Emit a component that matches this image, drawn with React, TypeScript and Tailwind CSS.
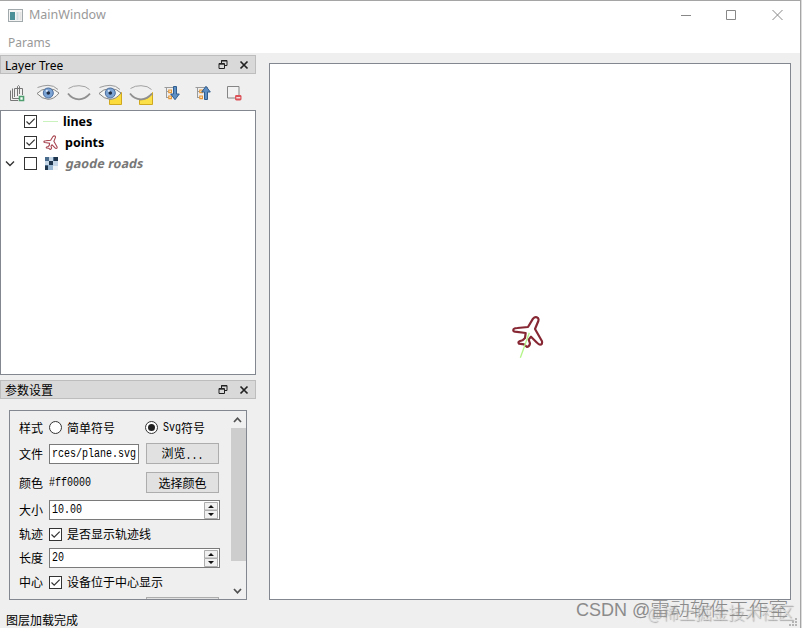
import React, { useState } from "react";

const PLANE =
  "M99 41 Q106 33 114 39 Q117 43 115 48 L105 72 L126 109 Q128 119 120 119 Q116 119 111 113 L93 95 L86 104 L90 115 Q89 124 81 126 L72 118 L57 116 Q53 112 58 109 L68 106 L75 99 L77 84 L45 80 Q37 78 41 72 Q45 69 52 69 L84 66 Z";

const ui = "font-['Noto_Sans','Noto_Sans_CJK_SC',sans-serif]";

// half-width latin, stretched to the height of the CJK glyphs
const Mono = ({ children }: { children: React.ReactNode }) => (
  <span className="inline-block translate-y-px scale-y-[1.2] font-['Liberation_Mono',monospace] text-[10px] leading-none">{children}</span>
);

const EyeShape = () => (
  <>
    <path d="M1.5 6.5 Q7 4.5 12 4.3 Q18 4.3 22 8.5" fill="none" stroke="#9a9a9a" strokeWidth="1" />
    <path d="M1 12.5 Q5 8 12 7.5 Q19 7.8 23 12 Q18 18.5 12 18.3 Q6 18 1 12.5Z" fill="#f6f6f4" stroke="#858585" strokeWidth="1" />
    <circle cx="12.3" cy="12" r="5" fill="#7ba3d4" stroke="#4c6e9e" strokeWidth="1" />
    <circle cx="12.3" cy="12" r="1.8" fill="#202c42" />
    <circle cx="10.8" cy="9.8" r="1.1" fill="#dce8f6" />
  </>
);

const ClosedShape = () => (
  <>
    <path d="M1.5 7.5 Q6 4.5 12 4.7 Q19 4.8 22.5 8.5" fill="none" stroke="#a2a2a2" strokeWidth="1" />
    <path d="M1 12.5 Q5 18 12 18.4 Q18 18.3 23 12.7" fill="none" stroke="#909090" strokeWidth="1.8" />
  </>
);

const TreeLines = () => (
  <>
    <path d="M4.5 6.5 H17 M6.5 6.5 V17 M6.5 10.5 H9 M6.5 16.5 H9" fill="none" stroke="#9b9b9b" />
    <path d="M8.8 9 h2.6 v2.6 h-2.6z M8.8 15 h2.6 v2.6 h-2.6z" fill="#fff1d8" stroke="#e5983a" strokeWidth="1.2" />
  </>
);

const toolIcons: React.ReactNode[] = [
  <>
    <path d="M5.5 9.5 V19.5 H13 M7.5 7.5 V17.5 H14 M9.5 16 V7.5 H17.5 V14 M12.5 15 V5.5 Q13.5 3.5 14.5 5.5 V13" fill="none" stroke="#777" />
    <path d="M14.5 15.5h4v4h-4z" fill="#f4fff7" stroke="#4f9e70" strokeWidth="1.6" />
  </>,
  <EyeShape />,
  <ClosedShape />,
  <>
    <path d="M11.5 11.5 h12 v12 h-12z" fill="#fbdc3c" stroke="#d0a820" />
    <EyeShape />
  </>,
  <>
    <path d="M23.5 11.5 V23.5 H10.5 V19 Q20 19 23.5 11.5Z" fill="#fbe04a" stroke="#d0a820" />
    <ClosedShape />
  </>,
  <>
    <TreeLines />
    <path d="M13.5 5.5 h3 v7.5 h2.8 l-4.3 5.7 -4.3 -5.7 h2.8z" fill="#5d8fc5" stroke="#315d8e" />
  </>,
  <>
    <TreeLines />
    <path d="M13.5 18.5 h3 v-7.5 h2.8 l-4.3 -5.7 -4.3 5.7 h2.8z" fill="#5d8fc5" stroke="#315d8e" />
  </>,
  <>
    <path d="M5.5 5.5 h11.5 v11.5 h-11.5z" fill="#f2f2f2" stroke="#858585" />
    <rect x="13" y="14" width="6.5" height="5.5" rx="1.4" fill="#dc5259" />
    <path d="M14.3 16.8 h4" stroke="#fff" strokeWidth="1.2" />
  </>,
];

function DockTitle({ title }: { title: string }) {
  return (
    <div className={`flex h-[19px] w-64 shrink-0 items-center border border-[#bdbdbd] bg-[#d9d9d9] pl-1 text-[12px] text-black ${ui}`}>
      <span className="flex-1 pt-[2px] leading-none">{title}</span>
      <svg width="10" height="10" className="mr-[11px]" fill="none" stroke="#222" strokeWidth="1">
        <path d="M3.5 3 V.5 h5.5 v5 H7 M3 1 h6 M1 3.5 h5.5 v5 H1z M1 4.2 h5.5" />
      </svg>
      <svg width="10" height="10" className="mr-[6px]" stroke="#222" strokeWidth="1.7">
        <path d="M1.5 1.5 L8.5 8.5 M8.5 1.5 L1.5 8.5" />
      </svg>
    </div>
  );
}

function Check({ checked, onClick }: { checked: boolean; onClick?: () => void }) {
  return (
    <span onClick={onClick} className="flex size-[13px] shrink-0 items-center justify-center border border-[#333] bg-white">
      {checked && (
        <svg width="11" height="11" fill="none" stroke="#333" strokeWidth="1.2">
          <path d="M1.5 5.5 L4.2 8.2 L9.7 2.7" />
        </svg>
      )}
    </span>
  );
}

function Radio({ checked, onClick }: { checked: boolean; onClick: () => void }) {
  return (
    <span onClick={onClick} className="mb-px flex size-[13px] shrink-0 items-center justify-center rounded-full border border-[#333] bg-white">
      {checked && <span className="size-[7px] rounded-full bg-[#222]" />}
    </span>
  );
}

function Row({ label, height, children }: { label: string; height: string; children: React.ReactNode }) {
  return (
    <div className={`flex shrink-0 items-center ${height}`}>
      <span className="w-[30px] shrink-0">{label}</span>
      {children}
    </div>
  );
}

function PushButton({ children }: { children: React.ReactNode }) {
  return <button className="mb-px h-[21px] w-[73px] shrink-0 border border-[#adadad] bg-[#e1e1e1] text-center leading-none">{children}</button>;
}

function Spin({ value }: { value: string }) {
  return (
    <div className="flex h-5 w-[171px] items-center border border-[#7a7a7a] bg-white pr-px pl-[2px]">
      <span className="flex flex-1 items-center leading-none"><Mono>{value}</Mono></span>
      <svg width="14" height="17">
        <path d="M.5 .5 h13 v7.5 h-13z M.5 8.5 h13 v8 h-13z" fill="#f0f0f0" stroke="#adadad" />
        <path d="M4 6 L7 3 L10 6z M4 11 L7 14 L10 11z" fill="#111" />
      </svg>
    </div>
  );
}

export default function App() {
  const [lines, setLines] = useState(true);
  const [points, setPoints] = useState(true);
  const [roads, setRoads] = useState(false);
  const [style, setStyle] = useState("svg");
  const [track, setTrack] = useState(true);
  const [center, setCenter] = useState(true);

  return (
    <div className="relative flex h-[628px] w-[802px] overflow-hidden bg-[#dcdcdc]">
      <div className="flex w-[801px] flex-col border-t border-r border-[#a5a5a5] bg-[#efefef]">
        {/* title bar */}
        <header className={`flex h-[30px] shrink-0 items-center bg-white pb-[2px] pl-2 text-[12px] text-[#999] ${ui}`}>
          <svg width="15" height="13" className="mr-[6px]">
            <rect x=".5" y=".5" width="14" height="12" fill="#f4f4f4" stroke="#a2a9ad" />
            <path d="M2 3h5v8H2z" fill="#4b8f99" />
            <path d="M8.5 3h2v8h-2z" fill="#d1dce0" />
            <path d="M11.5 3h2v8h-2z" fill="#e2e2e2" />
          </svg>
          <span className="flex-1 pt-px text-[12.5px]">MainWindow</span>
          <svg width="104" height="12" className="mr-[16px]" fill="none" stroke="#888">
            <path d="M1 6.5 h10 M46.5 1.5 h9 v9 h-9z M92.5 1 L102.5 11 M102.5 1 L92.5 11" />
          </svg>
        </header>
        <nav className={`h-[22px] shrink-0 bg-white pl-2 text-[12px] leading-[24px] text-[#999] ${ui}`}>Params</nav>

        <div className="flex flex-1 overflow-hidden">
          <aside className="flex w-64 shrink-0 flex-col pt-[2px]">
            <DockTitle title="Layer Tree" />
            <div className="flex h-9 shrink-0 items-center gap-[7px] pt-[2px] pl-[5px]">
              {toolIcons.map((icon, i) => (
                <svg key={i} width="24" height="24" viewBox="0 0 24 24">{icon}</svg>
              ))}
            </div>

            <div className={`flex h-[265px] shrink-0 flex-col border border-[#828790] bg-white text-[12.5px] font-bold ${ui}`}>
              <div className="flex h-[21px] items-center pl-[23px]">
                <Check checked={lines} onClick={() => setLines(!lines)} />
                <span className="mr-[5px] ml-[6px] h-px w-[15px] bg-[#c9f2bd]" />
                <span className="pt-[2px]">lines</span>
              </div>
              <div className="flex h-[21px] items-center pl-[23px]">
                <Check checked={points} onClick={() => setPoints(!points)} />
                <svg width="15" height="15" viewBox="34 31 98 98" className="mr-[7px] ml-[6px]">
                  <path d={PLANE} fill="#fff" stroke="#a84450" strokeWidth="7" />
                </svg>
                <span className="pt-[2px]">points</span>
              </div>
              <div className="flex h-[21px] items-center pl-[4px]">
                <svg width="10" height="8" className="mr-[9px]" fill="none" stroke="#333" strokeWidth="1.4">
                  <path d="M1 1.5 L5 5.5 L9 1.5" />
                </svg>
                <Check checked={roads} onClick={() => setRoads(!roads)} />
                <svg width="14" height="13" className="mr-[8px] ml-[7px]">
                  <path d="M1 0h13v13H1z" fill="#c6d8e8" />
                  <path d="M1 0h4v4H1z M9 0h5v4H9z M1 8h4v5H1z" fill="#4a6c8c" />
                  <path d="M4 8h5v5H4z" fill="#9bb8d2" />
                  <path d="M5 4h4v4H5z M1 9h3v4H1z M10 0h4v4h-4z" fill="#20364d" />
                  <path d="M9 9h5v4H9z" fill="#eef3f6" />
                </svg>
                <span className="-skew-x-12 pt-[2px] tracking-[0.1px] text-[#777]">gaode roads</span>
              </div>
            </div>

            <div className="h-[5px] shrink-0" />
            <DockTitle title="参数设置" />

            {/* parameter form */}
            <div className="mt-[11px] ml-[9px] flex h-[190px] w-[238px] shrink-0 overflow-hidden border border-[#828790] font-['Noto_Sans_CJK_SC',sans-serif] text-[12px] text-black">
              <div className="flex flex-1 flex-col overflow-hidden pt-[4px] pl-[9px] leading-none">
                <Row label="样式" height="h-[26px]">
                  <Radio checked={style === "simple"} onClick={() => setStyle("simple")} />
                  <span className="ml-[5px] w-[78px]">简单符号</span>
                  <Radio checked={style === "svg"} onClick={() => setStyle("svg")} />
                  <span className="ml-[5px] flex items-center"><Mono>Svg</Mono>符号</span>
                </Row>
                <Row label="文件" height="h-[26px]">
                  <div className="mr-[7px] mb-px flex h-5 w-[90px] shrink-0 items-center justify-end border border-[#7a7a7a] bg-white pr-[2px]">
                    <Mono>rces/plane.svg</Mono>
                  </div>
                  <PushButton>浏览<Mono>...</Mono></PushButton>
                </Row>
                <Row label="颜色" height="h-[32px]">
                  <span className="flex w-[97px] items-center"><Mono>#ff0000</Mono></span>
                  <PushButton>选择颜色</PushButton>
                </Row>
                <Row label="大小" height="h-[22px]"><Spin value="10.00" /></Row>
                <Row label="轨迹" height="h-[26px]">
                  <Check checked={track} onClick={() => setTrack(!track)} />
                  <span className="ml-[5px]">是否显示轨迹线</span>
                </Row>
                <Row label="长度" height="h-[22px]"><Spin value="20" /></Row>
                <Row label="中心" height="h-[26px]">
                  <Check checked={center} onClick={() => setCenter(!center)} />
                  <span className="ml-[5px]">设备位于中心显示</span>
                </Row>
                <div className="mt-[2px] ml-[127px] h-[21px] w-[73px] shrink-0 border border-[#adadad] bg-[#e1e1e1]" />
              </div>
              <div className="flex w-4 shrink-0 flex-col items-center bg-[#f0f0f0]">
                <svg width="16" height="17" fill="none" stroke="#505050" strokeWidth="1.7">
                  <path d="M4 11 L7.5 7.2 L11 11" />
                </svg>
                <div className="h-[133px] w-[15px] bg-[#cdcdcd]" />
                <svg width="16" height="38" fill="none" stroke="#505050" strokeWidth="1.7">
                  <path d="M4 28 L7.5 31.8 L11 28" />
                </svg>
              </div>
            </div>
            <div className={`pt-[13px] pl-[6px] text-[12px] leading-[15px] text-black ${ui}`}>图层加载完成</div>
          </aside>

          {/* map canvas */}
          <main className="mt-[10px] ml-[13px] h-[537px] w-[522px] shrink-0 border border-[#828790] bg-white">
            <svg width="520" height="535">
              <g transform="translate(230 241) scale(.33333)">
                <path d={PLANE} fill="#fff" stroke="#862733" strokeWidth="6.5" strokeLinejoin="round" />
                <path d="M88 83 L61 158" stroke="#b4f58a" strokeWidth="4" />
              </g>
            </svg>
          </main>
        </div>
      </div>

      {/* watermarks */}
      <div className="absolute top-[601px] left-[647px] font-['Noto_Sans_CJK_SC',sans-serif] text-[16.5px] leading-[22px] font-light whitespace-nowrap text-[#dedede] [text-shadow:1px_1px_1px_#999]">
        @稀土掘金技术社区
      </div>
      <div className="absolute top-[598px] left-[576px] font-['Liberation_Sans','Noto_Sans_CJK_SC',sans-serif] text-[18px] leading-[22px] font-light whitespace-nowrap text-[#8b8b8b]">
        CSDN @<span className="text-[19.7px]">雷动软件工作室</span>
      </div>
      <svg width="10" height="10" className="absolute top-[618px] left-[789px]" fill="#b5b5b5">
        <path d="M6 0h2v2H6z M3 3h2v2H3z M6 3h2v2H6z M0 6h2v2H0z M3 6h2v2H3z M6 6h2v2H6z" />
      </svg>
    </div>
  );
}
